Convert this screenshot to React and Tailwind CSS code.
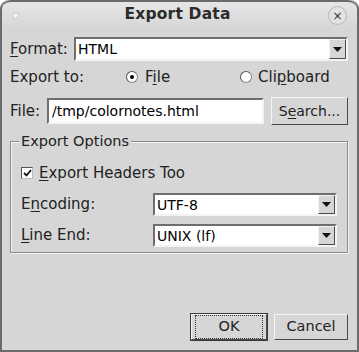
import React from 'react';

const U = ({ children }) => <span className="underline underline-offset-2 decoration-1">{children}</span>;

const Combo = ({ value, className = '' }) => (
  <div className={`flex items-center bg-white border-2 border-t-[#6e6e6e] border-l-[#6e6e6e] border-b-[#f4f4f4] border-r-[#f4f4f4] ${className}`}>
    <span className="flex-1 pl-[2px] leading-none text-[14px] text-black">{value}</span>
    <div className="w-[17px] h-full flex items-center justify-center bg-[#d6d6d6] border border-t-[#f4f4f4] border-l-[#f4f4f4] border-b-[#4a4a4a] border-r-[#4a4a4a]">
      <svg width="9" height="5" viewBox="0 0 9 5"><path d="M0 0h9L4.5 5z" fill="#111" /></svg>
    </div>
  </div>
);

const Radio = ({ checked }) => (
  <span className="w-[12px] h-[12px] rounded-full bg-white border border-[#888] border-t-[#555] border-l-[#555] flex items-center justify-center">
    {checked && <span className="w-[4px] h-[4px] rounded-full bg-black" />}
  </span>
);

const Button = ({ children, def }) => (
  <div className={def ? 'border border-[#3a3a3a] p-0' : ''}>
    <div className="h-[26px] px-[3px] flex items-center justify-center bg-[#d6d6d6] border border-t-[#f4f4f4] border-l-[#f4f4f4] border-b-[#4a4a4a] border-r-[#4a4a4a]">
      <div className={`h-full w-full flex items-center justify-center ${def ? 'outline outline-1 outline-dotted outline-[#333] -outline-offset-1' : ''}`}>
        {children}
      </div>
    </div>
  </div>
);

export default function App() {
  return (
    <div className="w-[359px] h-[352px] bg-[#d6d6d6] border-2 border-t-0 border-[#6b6b6b] rounded-t-[9px] overflow-hidden text-[15px] text-[#222] flex flex-col" style={{ fontFamily: '"DejaVu Sans", sans-serif' }}>
      {/* title bar */}
      <div className="h-[29px] shrink-0 flex items-center justify-between px-[10px] bg-gradient-to-b from-[#e6e6e6] to-[#d6d6d6] border-t-2 border-[#6b6b6b] rounded-t-[9px]">
        <span className="w-[7px] h-[7px] rounded-full bg-[#f2f2f2] border border-[#c4c4c4]" />
        <span className="font-bold text-[15.5px] text-[#2b2b2b] tracking-[0.2px] ml-[8px] -mt-[2px]">Export Data</span>
        <span className="w-[19px] h-[19px] rounded-full border border-[#b8b8b8] bg-[#e2e2e2] flex items-center justify-center text-[#333] text-[12px] leading-none">×</span>
      </div>

      <div className="flex-1 flex flex-col px-[8px] pt-[8px] pb-[9px]">
        {/* format */}
        <div className="flex items-center h-[24px]">
          <span className="w-[64px]"><U>F</U>ormat:</span>
          <Combo value="HTML" className="flex-1 h-[24px] mr-[1px]" />
        </div>

        {/* export to */}
        <div className="flex items-center h-[18px] mt-[7px]">
          <span className="w-[116px]">Export to:</span>
          <Radio checked />
          <span className="ml-[7px] w-[95px]">F<U>i</U>le</span>
          <Radio />
          <span className="ml-[6px]">Cli<U>p</U>board</span>
        </div>

        {/* file */}
        <div className="flex items-center h-[28px] mt-[11px]">
          <span className="w-[37px]">File:</span>
          <div className="w-[217px] h-[26px] flex items-center bg-white border-2 border-t-[#6e6e6e] border-l-[#6e6e6e] border-b-[#f4f4f4] border-r-[#f4f4f4] pl-[3px] text-[14px] text-black">/tmp/colornotes.html</div>
          <div className="ml-[7px] w-[77px] text-[14px]">
            <div className="h-[28px] flex items-center justify-center bg-[#d6d6d6] border border-t-[#f4f4f4] border-l-[#f4f4f4] border-b-[#4a4a4a] border-r-[#4a4a4a]">
              S<U>e</U>arch...
            </div>
          </div>
        </div>

        {/* group */}
        <div className="mt-[16px] border border-[#8a8a8a] shadow-[inset_1px_1px_0_#f4f4f4,1px_1px_0_#f4f4f4] relative h-[112px] mr-[1px] px-[10px] pt-[18px]">
          <span className="absolute -top-[10px] left-[8px] px-[2px] bg-[#d6d6d6] leading-[18px] text-[14.5px]">Export Options</span>
          <div className="flex items-center h-[16px] mt-[5px]">
            <span className="w-[12px] h-[12px] bg-white border border-t-[#555] border-l-[#555] border-b-[#bbb] border-r-[#bbb] flex items-center justify-center">
              <svg width="9" height="8" viewBox="0 0 9 8"><path d="M1 4l2.5 2.5L8 1" stroke="#111" strokeWidth="1.8" fill="none" /></svg>
            </span>
            <span className="ml-[6px]"><U>E</U>xport Headers Too</span>
          </div>
          <div className="flex items-center h-[23px] mt-[12px]">
            <span className="w-[132px]">E<U>n</U>coding:</span>
            <Combo value="UTF-8" className="flex-1 h-[23px]" />
          </div>
          <div className="flex items-center h-[23px] mt-[8px]">
            <span className="w-[132px]"><U>L</U>ine End:</span>
            <Combo value="UNIX (lf)" className="flex-1 h-[23px]" />
          </div>
        </div>

        <div className="flex-1" />

        {/* buttons */}
        <div className="flex justify-end items-center gap-[6px] mr-[1px] text-[14.5px]">
          <div className="w-[78px]"><Button def>OK</Button></div>
          <div className="w-[74px]"><Button>Cancel</Button></div>
        </div>
      </div>
    </div>
  );
}
